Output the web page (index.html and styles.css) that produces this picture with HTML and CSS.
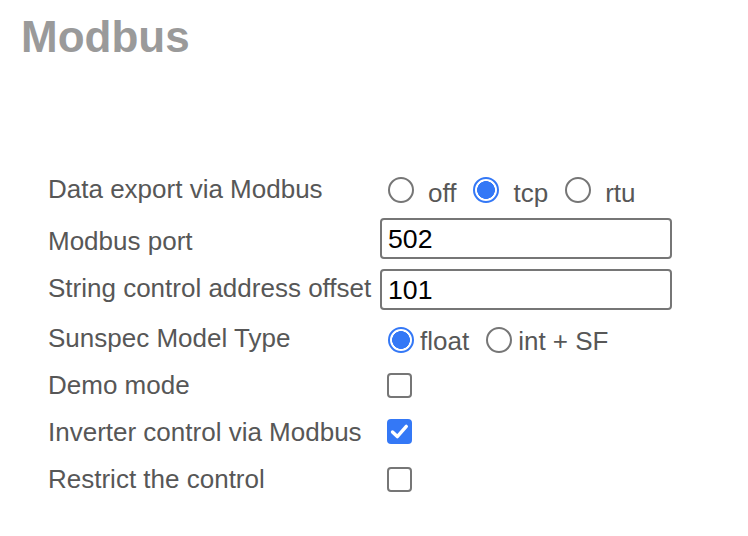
FILE: index.html
```html
<!DOCTYPE html>
<html>
<head>
<meta charset="utf-8">
<link rel="stylesheet" href="styles.css">
</head>
<body>
<h1 class="title">Modbus</h1>
<div class="form">
  <div class="row row-a">
    <div class="label">Data export via Modbus</div>
    <div class="opts">
      <span class="radio"></span><span class="opt">off</span>
      <span class="radio on"></span><span class="opt">tcp</span>
      <span class="radio"></span><span class="opt">rtu</span>
    </div>
  </div>
  <div class="row row-b">
    <div class="label">Modbus port</div>
    <div class="field">502</div>
  </div>
  <div class="row row-c">
    <div class="label">String control address offset</div>
    <div class="field">101</div>
  </div>
  <div class="row row-d">
    <div class="label">Sunspec Model Type</div>
    <div class="opts tight">
      <span class="radio on"></span><span class="opt">float</span>
      <span class="radio"></span><span class="opt">int + SF</span>
    </div>
  </div>
  <div class="row row-e">
    <div class="label">Demo mode</div>
    <span class="check"></span>
  </div>
  <div class="row row-f">
    <div class="label">Inverter control via Modbus</div>
    <span class="check on"><svg viewBox="0 0 25 25" width="25" height="25"><path d="M5.5 13 L10.3 17.6 L19.3 7.4" fill="none" stroke="#fff" stroke-width="3.4" stroke-linecap="round" stroke-linejoin="round"/></svg></span>
  </div>
  <div class="row row-g">
    <div class="label">Restrict the control</div>
    <span class="check"></span>
  </div>
</div>
</body>
</html>
```

FILE: styles.css
```css
html, body {
  margin: 0;
  padding: 0;
  background: #ffffff;
}
body {
  font-family: "Liberation Sans", Arial, sans-serif;
  width: 748px;
  height: 536px;
  overflow: hidden;
}
.title {
  margin: 11px 0 0 21px;
  font-size: 44px;
  line-height: 52px;
  font-weight: bold;
  color: #9a9a9a;
}
.form {
  margin-top: 101px;
  padding-left: 48px;
}
.row {
  display: flex;
  align-items: flex-start;
}
.label {
  width: 332px;
  font-size: 26px;
  line-height: 30px;
  color: #575757;
  white-space: nowrap;
}
.row-a { height: 48px; }
.row-b { height: 52px; }
.row-c { height: 50px; }
.row-d { height: 46px; }
.row-e, .row-f, .row-g { height: 47px; }

.row-a .label { margin-top: 10px; }
.row-b .label { margin-top: 14px; }
.row-c .label { margin-top: 9px; }
.row-d .label { margin-top: 9px; }
.row-e .label, .row-f .label, .row-g .label { margin-top: 10px; }

.opts {
  display: flex;
  align-items: flex-start;
}
.radio {
  box-sizing: border-box;
  width: 26px;
  height: 26px;
  border: 2px solid #767676;
  border-radius: 50%;
  margin-left: 17px;
  margin-right: 14px;
  background: #fff;
  flex: none;
}
.radio:first-child { margin-left: 8px; }
.radio.on {
  border-color: #3478f6;
  background: radial-gradient(circle, #3478f6 0 8.6px, #ffffff 9.2px);
}
.opt {
  font-size: 26px;
  line-height: 30px;
  color: #575757;
  white-space: nowrap;
}
.row-a .radio { margin-top: 13px; }
.row-a .opt { margin-top: 14px; }
.opts.tight .radio { margin-right: 6px; margin-left: 17px; }
.opts.tight .radio:first-child { margin-left: 8px; }
.row-d .radio { margin-top: 13px; }
.row-d .opt { margin-top: 12px; }

.field {
  box-sizing: border-box;
  width: 292px;
  height: 41px;
  border: 2px solid #767676;
  border-radius: 4px;
  padding: 4px 0 0 6px;
  font-size: 26.67px;
  line-height: 30px;
  color: #000;
}
.row-b .field { margin-top: 6px; }
.row-c .field { margin-top: 5px; }

.check {
  box-sizing: border-box;
  display: block;
  width: 25px;
  height: 25px;
  border: 2px solid #767676;
  border-radius: 4px;
  margin-left: 7px;
  margin-top: 13px;
  background: #fff;
  flex: none;
}
.row-f .check { margin-top: 12px; }
.check.on {
  border: none;
  background: #3478f6;
}
.check svg { display: block; }
```
